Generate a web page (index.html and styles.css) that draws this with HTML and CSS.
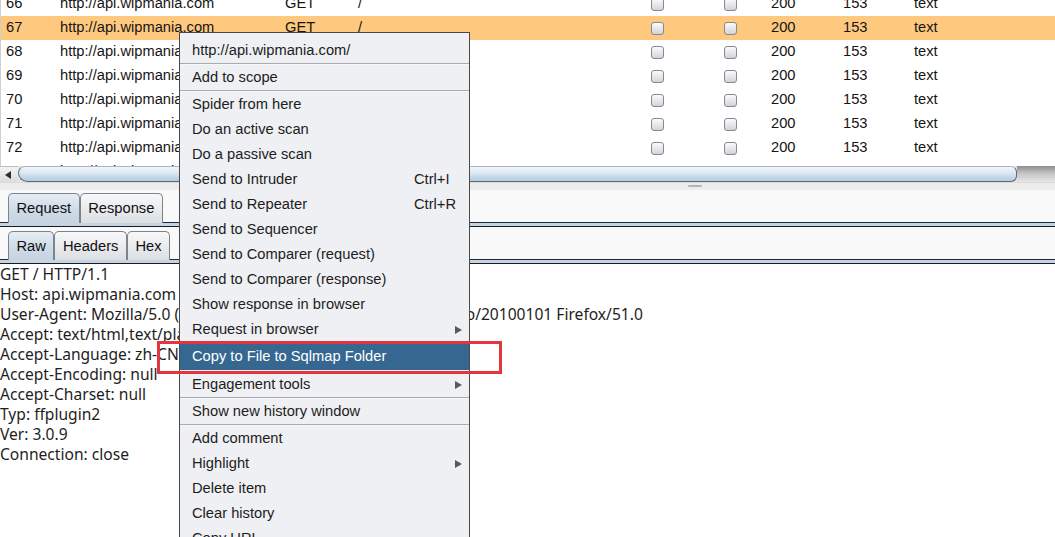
FILE: index.html
```html
<!DOCTYPE html>
<html>
<head>
<meta charset="utf-8">
<link rel="stylesheet" href="styles.css">
</head>
<body>
<div class="screen">
  <div class="table-view">
    <div class="rows">
      <div class="row"><span>66</span><span>http://api.wipmania.com</span><span>GET</span><span>/</span><span class="cell-cb"><i class="cb"></i></span><span class="cell-cb"><i class="cb"></i></span><span>200</span><span>153</span><span>text</span></div>
      <div class="row selected"><span>67</span><span>http://api.wipmania.com</span><span>GET</span><span>/</span><span class="cell-cb"><i class="cb"></i></span><span class="cell-cb"><i class="cb"></i></span><span>200</span><span>153</span><span>text</span></div>
      <div class="row"><span>68</span><span>http://api.wipmania.com</span><span>GET</span><span>/</span><span class="cell-cb"><i class="cb"></i></span><span class="cell-cb"><i class="cb"></i></span><span>200</span><span>153</span><span>text</span></div>
      <div class="row"><span>69</span><span>http://api.wipmania.com</span><span>GET</span><span>/</span><span class="cell-cb"><i class="cb"></i></span><span class="cell-cb"><i class="cb"></i></span><span>200</span><span>153</span><span>text</span></div>
      <div class="row"><span>70</span><span>http://api.wipmania.com</span><span>GET</span><span>/</span><span class="cell-cb"><i class="cb"></i></span><span class="cell-cb"><i class="cb"></i></span><span>200</span><span>153</span><span>text</span></div>
      <div class="row"><span>71</span><span>http://api.wipmania.com</span><span>GET</span><span>/</span><span class="cell-cb"><i class="cb"></i></span><span class="cell-cb"><i class="cb"></i></span><span>200</span><span>153</span><span>text</span></div>
      <div class="row"><span>72</span><span>http://api.wipmania.com</span><span>GET</span><span>/</span><span class="cell-cb"><i class="cb"></i></span><span class="cell-cb"><i class="cb"></i></span><span>200</span><span>153</span><span>text</span></div>
      <div class="row"><span>73</span><span>http://api.wipmania.com</span><span>GET</span><span>/</span><span class="cell-cb"><i class="cb"></i></span><span class="cell-cb"><i class="cb"></i></span><span>200</span><span>153</span><span>text</span></div>
    </div>
  </div>
  <div class="hscroll">
    <div class="sb-btn"><i class="arrow-left"></i></div>
    <div class="sb-thumb"></div>
    <div class="sb-track"></div>
  </div>
  <div class="divider"><i class="grip"></i></div>
  <div class="lower">
    <div class="tabs tabs-top">
      <div class="tab active">Request</div>
      <div class="tab">Response</div>
    </div>
    <div class="tabline"></div>
    <div class="tabs tabs-sub">
      <div class="tab active">Raw</div>
      <div class="tab">Headers</div>
      <div class="tab">Hex</div>
    </div>
    <div class="tabline"></div>
    <div class="editor">
      <div>GET / HTTP/1.1</div>
      <div>Host: api.wipmania.com</div>
      <div>User-Agent: Mozilla/5.0 (Windows NT 6.1; WOW64; rv:51.0) Gecko/20100101 Firefox/51.0</div>
      <div>Accept: text/html,text/plain,application/xml;q=0.9,*/*;q=0.8</div>
      <div>Accept-Language: zh-CN,zh;q=0.8,en-US;q=0.5,en;q=0.3</div>
      <div>Accept-Encoding: null</div>
      <div>Accept-Charset: null</div>
      <div>Typ: ffplugin2</div>
      <div>Ver: 3.0.9</div>
      <div>Connection: close</div>
    </div>
  </div>

  <div class="menu">
    <div class="item">http://api.wipmania.com/</div>
    <div class="sep"></div>
    <div class="item">Add to scope</div>
    <div class="sep"></div>
    <div class="item">Spider from here</div>
    <div class="item">Do an active scan</div>
    <div class="item">Do a passive scan</div>
    <div class="item"><span class="label">Send to Intruder</span><span class="key">Ctrl+I</span></div>
    <div class="item"><span class="label">Send to Repeater</span><span class="key">Ctrl+R</span></div>
    <div class="item">Send to Sequencer</div>
    <div class="item">Send to Comparer (request)</div>
    <div class="item">Send to Comparer (response)</div>
    <div class="item">Show response in browser</div>
    <div class="item"><span class="label">Request in browser</span><i class="sub"></i></div>
    <div class="item hot">Copy to File to Sqlmap Folder</div>
    <div class="item"><span class="label">Engagement tools</span><i class="sub"></i></div>
    <div class="sep"></div>
    <div class="item">Show new history window</div>
    <div class="sep"></div>
    <div class="item">Add comment</div>
    <div class="item"><span class="label">Highlight</span><i class="sub"></i></div>
    <div class="item">Delete item</div>
    <div class="item">Clear history</div>
    <div class="item">Copy URL</div>
  </div>
  <div class="callout"></div>
</div>
</body>
</html>
```

FILE: styles.css
```css
html, body {
  margin: 0;
  padding: 0;
}
body {
  background: #ffffff;
  font-family: "Liberation Sans", Arial, sans-serif;
  font-size: 14.7px;
  color: #151515;
}
.screen {
  position: relative;
  width: 1055px;
  height: 537px;
  overflow: hidden;
  display: flex;
  flex-direction: column;
}

/* ---------- table ---------- */
.table-view {
  height: 166px;
  overflow: hidden;
  background: #fff;
  border-left: 1px solid #cfcfcf;
  flex: none;
}
.rows {
  margin-top: -8px;
}
.row {
  height: 24px;
  line-height: 23px;
  display: grid;
  grid-template-columns: 54px 225px 73px 293px 73px 47px 72px 71px 1fr;
  padding-left: 5px;
  white-space: nowrap;
}
.row.selected {
  background: #fec97f;
}
.cell-cb {
  display: flex;
  align-items: center;
}
.cb {
  display: block;
  width: 11px;
  height: 11px;
  border: 1px solid #868a90;
  border-radius: 3px;
  background: linear-gradient(#fafbfc, #e2e4e8 60%, #cfd2d8);
  margin-top: 1px;
}

/* ---------- horizontal scrollbar ---------- */
.hscroll {
  height: 16px;
  display: flex;
  flex: none;
  background: #e4e4e4;
}
.sb-btn {
  width: 18px;
  flex: none;
  display: flex;
  align-items: center;
  justify-content: center;
  background: linear-gradient(#f4f4f4, #dcdcdc);
  border-top: 1px solid #bdbdbd;
  box-sizing: border-box;
}
.arrow-left {
  width: 0;
  height: 0;
  border-top: 4px solid transparent;
  border-bottom: 4px solid transparent;
  border-right: 6px solid #2c2c2c;
  margin-right: 2px;
}
.sb-thumb {
  flex: 1;
  box-sizing: border-box;
  border: 1px solid #5b6b7b;
  border-top-color: #aab6c2;
  border-radius: 9px 8px 8px 12px;
  background: linear-gradient(#f1f6fb, #dbe7f2 45%, #c3d6e8 75%, #b6cbdf);
}
.sb-track {
  width: 38px;
  flex: none;
  background: linear-gradient(#8d8d8d, #c4c4c4 45%, #e6e6e6);
}

/* ---------- split divider ---------- */
.divider {
  height: 8px;
  flex: none;
  background: #ececec;
  border-top: 1px solid #dadada;
  box-sizing: border-box;
  padding-top: 2px;
  padding-left: 688px;
}
.grip {
  display: block;
  width: 14px;
  height: 2px;
  border-radius: 1px;
  background: #b4b4b4;
}

/* ---------- lower pane ---------- */
.lower {
  flex: 1;
  background: #f9f9f9;
  display: flex;
  flex-direction: column;
}
.tabs {
  display: flex;
  align-items: flex-end;
  padding-left: 8px;
  position: relative;
  z-index: 1;
}
.tabs-top {
  padding-top: 3px;
}
.tabs-sub {
  padding-top: 4px;
}
.tab {
  box-sizing: border-box;
  padding: 0 7.5px;
  border: 1px solid #7b838d;
  border-bottom: none;
  border-radius: 5px 5px 0 0;
  background: linear-gradient(#f7f8f9, #e8eaed 55%, #dcdfe3);
  color: #111;
  margin-bottom: -1px;
}
.tabs-top .tab {
  height: 30px;
  line-height: 29px;
}
.tabs-sub .tab {
  height: 29px;
  line-height: 28px;
}
.tab.active {
  background: linear-gradient(#e6edf4, #cfdbe7 55%, #c6d3e0);
}
.tabline {
  height: 5px;
  flex: none;
  box-sizing: border-box;
  border-top: 1px solid #1f2a36;
  border-bottom: 1px solid #141c26;
  background: #c7d3df;
}
.editor {
  flex: 1;
  background: #fff;
  font-family: "Noto Sans", "Open Sans", sans-serif;
  font-size: 15.6px;
  line-height: 20px;
  color: #1e1e1e;
  white-space: nowrap;
  padding-top: 0;
}

/* ---------- context menu ---------- */
.menu {
  position: absolute;
  left: 179px;
  top: 32px;
  width: 291px;
  height: 540px;
  box-sizing: border-box;
  border: 1px solid #4a4a4a;
  background: #eef0f3;
  padding-top: 5px;
  z-index: 5;
  color: #1d1d1d;
}
.item {
  height: 25px;
  line-height: 25px;
  padding-left: 12px;
  display: flex;
  align-items: center;
  white-space: nowrap;
}
.item .label {
  flex: 1;
}
.item .key {
  width: 55px;
  flex: none;
}
.item.hot {
  height: 27px;
  line-height: 27px;
  margin: 1px 0 2px;
  background: #356791;
  color: #ffffff;
}
.sub {
  width: 0;
  height: 0;
  border-top: 4.5px solid transparent;
  border-bottom: 4.5px solid transparent;
  border-left: 7px solid #555a60;
  margin-right: 7px;
  flex: none;
}
.sep {
  height: 2px;
  box-sizing: border-box;
  border-top: 1px solid #a7abb1;
  background: #f6f7f8;
}

/* ---------- annotation ---------- */
.callout {
  position: absolute;
  left: 157px;
  top: 341px;
  width: 345px;
  height: 33px;
  box-sizing: border-box;
  border: 3px solid #e2353d;
  z-index: 6;
}
```
